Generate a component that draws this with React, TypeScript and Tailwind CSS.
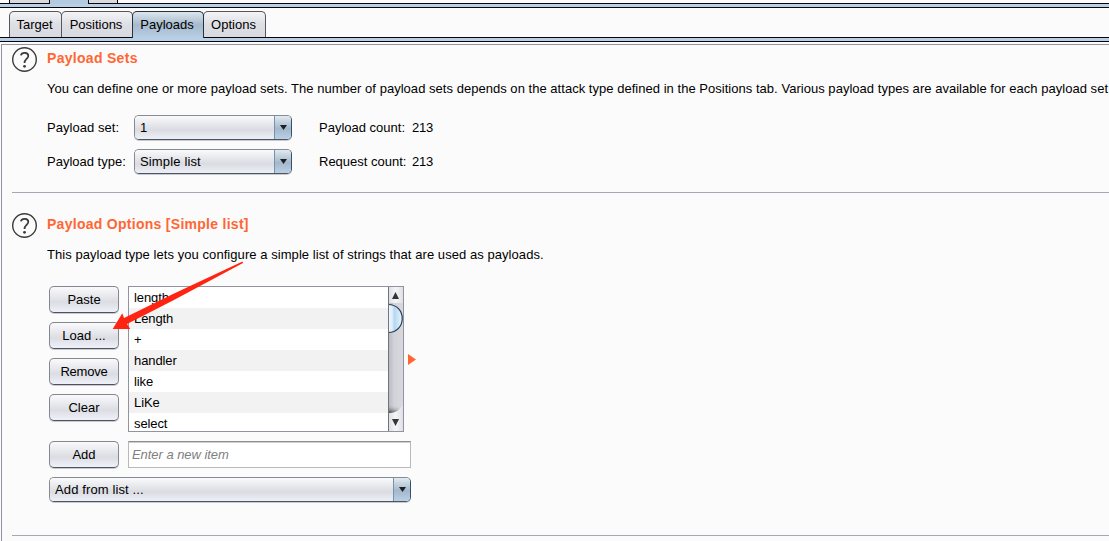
import React from "react";

const buttonBase =
  "flex h-[27px] w-[70px] shrink-0 items-center justify-center rounded-[5px] border border-[#85868e] border-b-[#50535d] bg-linear-to-b from-[#fafafc] via-[#dcdde3] via-60% to-[#eff1fa] shadow-[0_1px_0_#c9cace]";

function Button({ children }: { children: React.ReactNode }) {
  return <button className={buttonBase}>{children}</button>;
}

function Select({ value, className }: { value: string; className: string }) {
  return (
    <div
      className={`flex h-[25px] overflow-hidden rounded-[5px] border border-[#858a93] border-r-[#34536b] border-b-[#4b5664] shadow-[0_1px_0_#c9cace] ${className}`}
    >
      <div className="flex flex-1 items-center bg-linear-to-b from-[#fafafc] via-[#dadce2] via-60% to-[#eef0f7] pl-[5px]">
        {value}
      </div>
      <div className="flex w-[17px] items-center justify-center border-l border-[#7893a9] bg-linear-to-b from-[#e1eaf0] via-[#a4b8cb] via-55% to-[#b9d0e5]">
        <svg width="7" height="5" viewBox="0 0 7 5">
          <path d="M0 0H7L3.5 5Z" fill="#1d2023" />
        </svg>
      </div>
    </div>
  );
}

function HelpIcon() {
  return (
    <svg className="mt-[2px] shrink-0" width="26" height="26" viewBox="0 0 26 26" fill="none" stroke="#3b3b3b">
      <circle cx="12.5" cy="12.5" r="11.8" strokeWidth="1.4" />
      <path d="M8.9 8.4C9.7 4.8 16.5 4.9 16.3 9C16.1 12 12.5 12.1 12.5 16" strokeWidth="1.7" />
      <circle cx="12.5" cy="19.3" r="1.4" fill="#3b3b3b" stroke="none" />
    </svg>
  );
}

function Tab({ label, active, className }: { label: string; active?: boolean; className: string }) {
  return (
    <div
      className={`flex items-center justify-center rounded-t-[5px] border border-b-0 pr-[2px] ${
        active
          ? "z-10 -mb-px h-[27px] border-[#24333f] bg-linear-to-b from-[#dce6ec] via-[#a6bacc] to-[#b8cfe5]"
          : "h-[26px] border-[#55565e] bg-linear-to-b from-[#f4f4f6] via-[#dedfe4] to-[#d9dae0]"
      } ${className}`}
    >
      {label}
    </div>
  );
}

function Strip() {
  return <div className="h-[5px] shrink-0 border-y border-[#05060e] bg-[#b8cfe5]" />;
}

const payloads = ["length", "Length", "+", "handler", "like", "LiKe", "select"];

function Scrollbar() {
  return (
    <svg className="shrink-0" width="15" height="144" viewBox="0 0 15 144">
      <defs>
        <linearGradient id="thumb">
          <stop offset="0" stopColor="#f5faff" />
          <stop offset=".3" stopColor="#dcecfa" />
          <stop offset=".45" stopColor="#b7d6f1" />
          <stop offset="1" stopColor="#e7f7ff" />
        </linearGradient>
        <linearGradient id="track">
          <stop offset="0" stopColor="#b5b5bd" />
          <stop offset=".4" stopColor="#d2d2d9" />
          <stop offset="1" stopColor="#d8d8df" />
        </linearGradient>
        <linearGradient id="arrowBox">
          <stop offset="0" stopColor="#dadce0" />
          <stop offset=".5" stopColor="#f5f5f7" />
          <stop offset="1" stopColor="#dfe0e4" />
        </linearGradient>
        <linearGradient id="shade" x1="0" y1="1" x2=".5" y2="0">
          <stop offset="0" stopColor="#333338" />
          <stop offset="1" stopColor="#d2d2d9" stopOpacity="0" />
        </linearGradient>
      </defs>
      <rect width="15" height="144" fill="url(#arrowBox)" />
      <path d="M0 16H15V118C12 120 12 126 0 126Z" fill="url(#track)" />
      <path d="M0 118H14C11 122 10 126 0 126Z" fill="url(#shade)" />
      <path d="M0 17.5C19 17.5 19 45.5 0 45.5Z" fill="url(#thumb)" />
      <path d="M0 17.5C19 17.5 19 45.5 0 45.5" fill="none" stroke="#283d4e" strokeWidth="1.2" />
      <path d="M0 0V144" stroke="#70757c" strokeWidth="2" />
      <path d="M4 12L7.5 5L11 12Z" fill="#333539" />
      <path d="M4 132L7.5 139L11 132Z" fill="#333539" />
    </svg>
  );
}

export default function App() {
  return (
    <div className="relative flex h-[541px] w-[1109px] flex-col overflow-hidden bg-[#fbfbfb] font-['Liberation_Sans',Arial,sans-serif] text-[13px] leading-[16px] whitespace-nowrap text-black">
      <div className="z-10 flex h-[3px] shrink-0 pl-[9px]">
        <div className="w-10 border-l border-[#05060e] bg-[#d9dae0]" />
        <div className="-mb-px w-[39px] border-l border-[#05060e] bg-[#b4cadf]" />
        <div className="w-[30px] border-x border-[#05060e] bg-[#d9dae0]" />
      </div>
      <Strip />
      <div className="z-10 flex h-[29px] shrink-0 items-end pl-[9px]">
        <Tab label="Target" className="w-[53px]" />
        <Tab label="Positions" className="-ml-px w-[72px]" />
        <Tab label="Payloads" active className="-ml-px w-[72px]" />
        <Tab label="Options" className="-ml-px w-[63px]" />
      </div>
      <Strip />
      <main className="mt-[2px] ml-px flex flex-1 flex-col border-t border-l border-[#9293a0] pl-[10px]">
        <section className="flex h-[148px] shrink-0 border-b border-[#a5a7b2]">
          <HelpIcon />
          <div className="ml-[9px] flex flex-col">
            <h2 className="mt-[5px] text-[14px] font-bold text-[#ff6633]">
              <span className="tracking-[0.3px]">Payload Sets</span>
            </h2>
            <p className="mt-[15px] tracking-[0.03px]">
              You can define one or more payload sets. The number of payload sets depends on the attack type defined in the Positions tab. Various payload types are available for each payload set
            </p>
            <div className="mt-[18px] flex h-[25px] items-center">
              <span className="w-[87px] tracking-[0.05px]">Payload set:</span>
              <Select value="1" className="w-[158px]" />
              <span className="ml-[27px] w-[93px]">Payload count:</span>
              <span className="tracking-[-0.2px]">213</span>
            </div>
            <div className="mt-[9px] flex h-[25px] items-center">
              <span className="w-[87px]">Payload type:</span>
              <Select value="Simple list" className="w-[158px] tracking-[0.15px]" />
              <span className="ml-[27px] w-[93px]">Request count:</span>
              <span className="tracking-[-0.2px]">213</span>
            </div>
          </div>
        </section>
        <section className="flex h-[343px] shrink-0 border-b border-[#a5a7b2] pt-[18px]">
          <HelpIcon />
          <div className="ml-[9px] flex flex-col">
            <h2 className="mt-[5px] text-[14px] font-bold text-[#ff6633]">
              <span className="tracking-[0.28px]">Payload Options [Simple list]</span>
            </h2>
            <p className="mt-[15px] tracking-[0.06px]">
              This payload type lets you configure a simple list of strings that are used as payloads.
            </p>
            <div className="mt-[23px] ml-[2px] flex h-[146px] gap-[9px]">
              <div className="flex flex-col gap-[9px]">
                <Button>Paste</Button>
                <Button>Load ...</Button>
                <Button><span className="tracking-[-0.2px]">Remove</span></Button>
                <Button>Clear</Button>
              </div>
              <div className="flex w-[276px] overflow-hidden border border-[#9293a0] bg-white">
                <ul className="flex-1">
                  {payloads.map((item, i) => (
                    <li key={i} className={`flex h-[21px] items-center pl-[5px] tracking-[-0.1px] ${i % 2 ? "bg-[#f2f2f2]" : "bg-white"}`}>
                      {item}
                    </li>
                  ))}
                </ul>
                <Scrollbar />
              </div>
              <svg className="mt-[68px] -ml-[5px]" width="8" height="11" viewBox="0 0 8 11">
                <path d="M0 0L8 5.5L0 11Z" fill="#ff6633" />
              </svg>
            </div>
            <div className="mt-[9px] ml-[2px] flex gap-[9px]">
              <Button>Add</Button>
              <div className="flex h-[27px] w-[283px] items-center border border-[#b9b9bd] border-t-[#8d8e93] bg-white pl-[3px] tracking-[-0.05px] text-[#808080] italic shadow-[inset_0_1px_0_#cfcfd2]">
                Enter a new item
              </div>
            </div>
            <Select value="Add from list ..." className="mt-[9px] ml-[2px] w-[362px] tracking-[0.12px]" />
          </div>
        </section>
      </main>
      <svg className="absolute top-[255px] left-[105px] z-20" width="145" height="80" viewBox="0 0 145 80">
        <path d="M7.7 74L17.3 58.3L19 63L68 39L137.5 6.5L138 8L68 45.5L22 69L25.3 74Z" fill="#ff2412" />
      </svg>
    </div>
  );
}
